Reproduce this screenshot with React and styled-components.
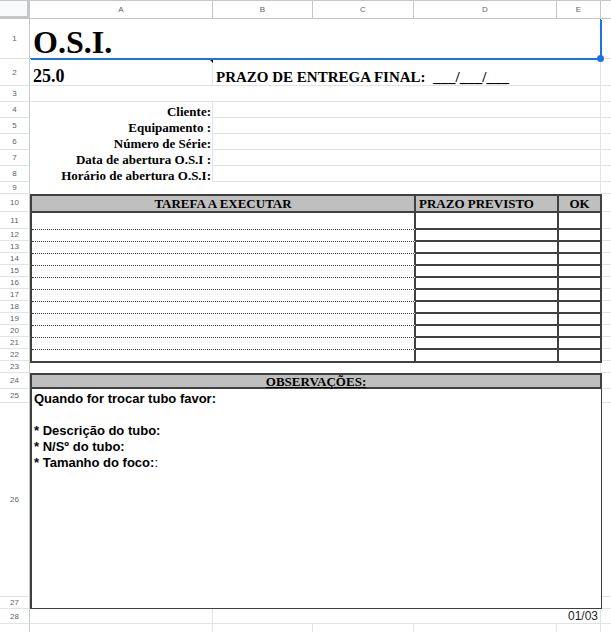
import React from 'react';
import styled, { createGlobalStyle } from 'styled-components';

const GRID = '#e2e3e3';
const HEAD_LINE = '#c4c7c5';
const INK = '#404040';
const SHADE = '#bfbfbf';
const BLUE = '#1a73e8';
const SERIF = '"Liberation Serif", "Times New Roman", serif';
const SANS = '"Liberation Sans", Arial, sans-serif';

// sheet row heights: column header, then rows 1..29
const ROWS = [19, 40, 27, 16, 16, 16, 16, 16, 16, 12, 18, 17, ...Array(11).fill(12), 12, 16, 14, 194, 12, 15, 30];

const LABELS = ['Cliente:', 'Equipamento :', 'Número de Série:', 'Data de abertura O.S.I :', 'Horário de abertura O.S.I:'];
const TASK_ROWS = Array.from({ length: 12 }, (_, i) => i);

const GlobalStyle = createGlobalStyle`
  html, body {
    margin: 0;
    padding: 0;
    background: #fff;
  }
  body {
    overflow: hidden;
  }
`;

const Sheet = styled.div`
  display: grid;
  grid-template-columns: 30px 183px 100px 101px 143px 44px 1fr;
  grid-template-rows: ${ROWS.map((h) => `${h}px`).join(' ')};
  width: 611px;
  height: 632px;
  overflow: hidden;
  color: #000;
`;

const Corner = styled.div`
  box-sizing: border-box;
  background: #f8f9fa;
  border-top: 1px solid ${HEAD_LINE};
  border-right: 3px solid ${HEAD_LINE};
  border-bottom: 3px solid ${HEAD_LINE};
`;

const ColHead = styled.div`
  box-sizing: border-box;
  display: flex;
  align-items: center;
  justify-content: center;
  border-top: 1px solid ${HEAD_LINE};
  border-bottom: 1px solid ${HEAD_LINE};
  border-right: ${(p) => (p.$last ? 'none' : `1px solid ${HEAD_LINE}`)};
  font: 8px ${SANS};
  color: #5f6368;
`;

const RowHead = styled.div`
  box-sizing: border-box;
  display: flex;
  align-items: center;
  justify-content: center;
  border-right: 1px solid ${HEAD_LINE};
  border-bottom: 1px solid ${GRID};
  font: 8px ${SANS};
  color: #5f6368;
`;

const Cell = styled.div`
  grid-column: span ${(p) => p.$span || 1};
  box-sizing: border-box;
  position: relative;
  min-width: 0;
  display: flex;
  align-items: flex-end;
  justify-content: ${(p) => p.$align || 'flex-start'};
  border-right: 1px solid ${GRID};
  border-bottom: ${(p) => (p.$open ? 'none' : `1px solid ${GRID}`)};
  white-space: pre;
`;

const Spill = styled.div`
  box-sizing: border-box;
  border-bottom: 1px solid ${GRID};
`;

const TitleCell = styled(Cell)`
  border-right: 1px solid ${BLUE};
  border-bottom: 1px solid ${BLUE};
  box-shadow: 1px 1px 0 ${BLUE};
  z-index: 1;
`;

const Handle = styled.span`
  position: absolute;
  right: -4px;
  bottom: -4px;
  width: 7px;
  height: 7px;
  border-radius: 50%;
  background: ${BLUE};
`;

const Note = styled.span`
  position: absolute;
  top: 0;
  right: -1px;
  width: 0;
  height: 0;
  border-top: 4px solid #000;
  border-left: 4px solid transparent;
`;

const Title = styled.span`
  padding-left: 3px;
  font: bold 32px/1 ${SERIF};
`;

const Serial = styled.span`
  padding-left: 3px;
  font: bold 18px/1 ${SERIF};
`;

const Deadline = styled.span`
  padding-left: 3px;
  font: bold 15px/1 ${SERIF};
`;

const LabelCell = styled(Cell)`
  border-bottom: none;
  padding-right: 1px;
  font: bold 13px/1 ${SERIF};
`;

const Table = styled.div`
  grid-column: 2 / 7;
  grid-row: 11 / 24;
  margin-right: -1px;
  margin-bottom: -2px;
  display: grid;
  grid-template-columns: 384px 143px 1fr;
  grid-template-rows: 17px 17px repeat(10, 12px) 13px;
  box-sizing: border-box;
  border: 2px solid ${INK};
  border-bottom: none;
  background: #fff;
  z-index: 1;
`;

const THead = styled.div`
  box-sizing: border-box;
  display: flex;
  align-items: center;
  justify-content: ${(p) => p.$align || 'center'};
  padding: 0 3px;
  background: ${SHADE};
  border-bottom: 2px solid ${INK};
  border-right: ${(p) => (p.$last ? 'none' : `2px solid ${INK}`)};
  font: bold 13px/1 ${SERIF};
  white-space: nowrap;
`;

const TaskCell = styled.div`
  box-sizing: border-box;
  border-right: 2px solid ${INK};
  border-bottom: ${(p) => (p.$last ? `2px solid ${INK}` : `1px dotted ${INK}`)};
`;

const SlotCell = styled.div`
  box-sizing: border-box;
  border-right: ${(p) => (p.$last ? 'none' : `2px solid ${INK}`)};
  border-bottom: 2px solid ${INK};
`;

const ObsHead = styled.div`
  grid-column: span 5;
  margin-right: -1px;
  box-sizing: border-box;
  display: flex;
  align-items: center;
  justify-content: center;
  background: ${SHADE};
  border: 2px solid ${INK};
  font: bold 13px/1 ${SERIF};
  text-decoration: underline;
  z-index: 1;
`;

const ObsBody = styled.div`
  grid-column: 2 / 7;
  grid-row: 26 / 29;
  margin-right: -1px;
  box-sizing: border-box;
  padding: 2px 2px 0;
  border-left: 2px solid ${INK};
  border-right: 1px solid ${INK};
  border-bottom: 1px solid ${INK};
  background: #fff;
  font: bold 13px/16px ${SANS};
  white-space: pre-line;
  z-index: 1;
`;

const Plain = styled.span`
  font-weight: normal;
`;

const Page = styled.span`
  align-self: center;
  padding-right: 2px;
  font: 12px/1 ${SANS};
  color: #222;
`;

export default function App() {
  return (
    <>
      <GlobalStyle />
      <Sheet>
        <Corner />
        {['A', 'B', 'C', 'D', 'E', ''].map((c, i) => (
          <ColHead key={i} $last={i === 5}>{c}</ColHead>
        ))}

        <RowHead>1</RowHead>
        <TitleCell $span={5}>
          <Title>O.S.I.</Title>
          <Handle />
        </TitleCell>
        <Spill />

        <RowHead>2</RowHead>
        <Cell>
          <Serial>25.0</Serial>
          <Note />
        </Cell>
        <Cell $span={4}>
          <Deadline>{'PRAZO DE ENTREGA FINAL:  ___/___/___'}</Deadline>
        </Cell>
        <Spill />

        <RowHead>3</RowHead>
        <Cell $span={5} />
        <Spill />

        {LABELS.map((label, i) => (
          <React.Fragment key={label}>
            <RowHead>{i + 4}</RowHead>
            <LabelCell $align="flex-end">{label}</LabelCell>
            <Cell $span={4} />
            <Spill />
          </React.Fragment>
        ))}

        <RowHead>9</RowHead>
        <Cell $span={5} $open />
        <Spill />

        <Table>
          <THead>TAREFA A EXECUTAR</THead>
          <THead $align="flex-start">PRAZO PREVISTO</THead>
          <THead $last>OK</THead>
          {TASK_ROWS.map((r) => (
            <React.Fragment key={r}>
              <TaskCell $last={r === 11} />
              <SlotCell />
              <SlotCell $last />
            </React.Fragment>
          ))}
        </Table>
        {Array.from({ length: 13 }, (_, i) => i + 10).map((n) => (
          <React.Fragment key={n}>
            <RowHead>{n}</RowHead>
            <Spill />
          </React.Fragment>
        ))}

        <RowHead>23</RowHead>
        <Cell $span={5} $open />
        <Spill />

        <RowHead>24</RowHead>
        <ObsHead>OBSERVAÇÕES:</ObsHead>
        <Spill />

        <ObsBody>
          {'Quando for trocar tubo favor:\n\n* Descrição do tubo:\n* N/Sº do tubo:\n* Tamanho do foco:'}
          <Plain>:</Plain>
        </ObsBody>
        {[25, 26, 27].map((n) => (
          <React.Fragment key={n}>
            <RowHead>{n}</RowHead>
            <Spill />
          </React.Fragment>
        ))}

        <RowHead>28</RowHead>
        <Cell />
        <Cell $span={4} $align="flex-end">
          <Page>01/03</Page>
        </Cell>
        <Spill />

        <RowHead>29</RowHead>
        <Cell />
        <Cell />
        <Cell />
        <Cell />
        <Cell />
        <Spill />
      </Sheet>
    </>
  );
}
